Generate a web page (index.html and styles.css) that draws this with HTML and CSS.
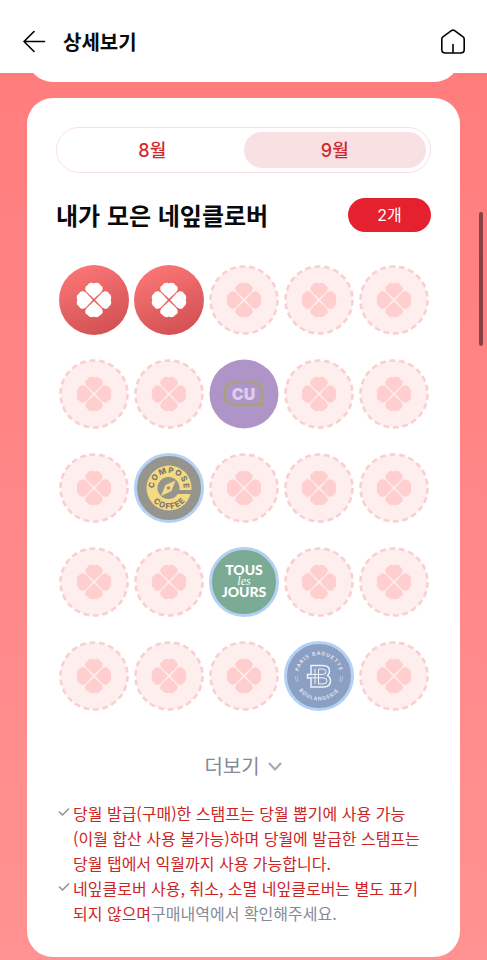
FILE: index.html
```
<!DOCTYPE html>
<html lang="ko">

<head>
    <meta charset="UTF-8" />
    <meta name="viewport" content="width=device-width, initial-scale=1.0" />
    <title>상세보기</title>
    <link rel="stylesheet" href="styles.css">
</head>

<body>
    <!-- Shared shapes -->
    <svg class="defs" width="0" height="0" aria-hidden="true">
        <defs>
            <linearGradient id="red" x1="0.3" y1="0" x2="0.7" y2="1">
                <stop offset="0" stop-color="#fb7676" />
                <stop offset="1" stop-color="#d15052" />
            </linearGradient>
            <path id="petal" d="M35 33.8 L28 27.3 C25.4 24.8 25.8 21 28.6 20.2 C29.6 17.6 33.4 17.2 35 18.4 C36.6 17.2 40.4 17.6 41.4 20.2 C44.2 21 44.6 24.8 42 27.3 Z" />
            <g id="clover">
                <use href="#petal" />
                <use href="#petal" transform="rotate(90 35 35)" />
                <use href="#petal" transform="rotate(180 35 35)" />
                <use href="#petal" transform="rotate(270 35 35)" />
            </g>
            <symbol id="empty" viewBox="0 0 70 70">
                <circle cx="35" cy="35" r="33.5" fill="#ffeeee" stroke="#f9d0d0" stroke-width="2.6" stroke-dasharray="5.8 3.77" />
                <use href="#clover" fill="#ffcfcf" />
            </symbol>
            <symbol id="filled" viewBox="0 0 70 70">
                <circle cx="35" cy="35" r="35" fill="url(#red)" />
                <use href="#clover" fill="#fff" />
            </symbol>
        </defs>
    </svg>

    <header class="topbar">
        <button class="icon-btn" type="button" aria-label="뒤로">
            <svg width="24" height="24" viewBox="0 0 24 24"><path d="M11 1.5 L1 11.5 L11 21.5 M1 11.5 H21.5" /></svg>
        </button>
        <h1>상세보기</h1>
        <a class="home" href="#" aria-label="홈">
            <svg width="26" height="26" viewBox="0 0 26 26"><path d="M1.8 10.2 Q1.8 8.8 2.9 7.9 L11.4 1.7 Q13 0.6 14.6 1.7 L23.1 7.9 Q24.2 8.8 24.2 10.2 V20.5 Q24.2 24 20.7 24 H5.3 Q1.8 24 1.8 20.5 Z M13 15.5 V24" /></svg>
        </a>
    </header>

    <main>
        <section class="card-prev"></section>

        <section class="card">
            <div class="tabs">
                <button type="button">8월</button>
                <button type="button" class="active">9월</button>
            </div>

            <div class="title-row">
                <h2>내가 모은 네잎클로버</h2>
                <span class="count">2개</span>
            </div>

            <ul class="stamps">
                <li><svg><use href="#filled" /></svg></li>
                <li><svg><use href="#filled" /></svg></li>
                <li><svg><use href="#empty" /></svg></li>
                <li><svg><use href="#empty" /></svg></li>
                <li><svg><use href="#empty" /></svg></li>

                <li><svg><use href="#empty" /></svg></li>
                <li><svg><use href="#empty" /></svg></li>
                <li>
                    <svg class="cu" viewBox="0 0 70 70">
                        <circle cx="35" cy="35" r="34.5" fill="#ae94c7" />
                        <path d="M31.5 23.5 H26 C18.5 23.5 15.5 28.5 15.5 34.8 C15.5 41 18.5 46 26 46 H54 L51.5 41.5 C52.8 39.5 53.5 37 53.5 34.8 C53.5 28.5 50.5 23.5 43 23.5 H35.5" fill="none" stroke="#a5a37a" stroke-width="2.6" stroke-linejoin="round" />
                        <text x="34.5" y="40.5" text-anchor="middle">CU</text>
                    </svg>
                </li>
                <li><svg><use href="#empty" /></svg></li>
                <li><svg><use href="#empty" /></svg></li>

                <li><svg><use href="#empty" /></svg></li>
                <li>
                    <svg class="compose" viewBox="0 0 70 70">
                        <circle cx="35" cy="35" r="33.5" fill="#95948d" stroke="#b3d1f4" stroke-width="3" />
                        <circle cx="35" cy="35" r="22.5" fill="#f4da83" />
                        <circle cx="34.5" cy="35" r="11" fill="#95948d" />
                        <path d="M40 37 H59 V41 H40 Z" fill="#95948d" />
                        <path d="M41.5 27.5 L37.5 38 L27 43 L31.5 32 Z" fill="#f4da83" />
                        <circle cx="34.5" cy="35" r="1.8" fill="#95948d" />
                        <path id="composeTop" d="M20.5 38.5 A14.800 14.800 0 1 1 47.500 42.500" fill="none" />
                        <path id="composeBottom" d="M14.2 35 A20.8 20.8 0 0 0 55.8 35" fill="none" />
                        <text><textPath href="#composeTop" startOffset="47%" text-anchor="middle">COMPOSE</textPath></text>
                        <text><textPath href="#composeBottom" startOffset="51%" text-anchor="middle">COFFEE</textPath></text>
                    </svg>
                </li>
                <li><svg><use href="#empty" /></svg></li>
                <li><svg><use href="#empty" /></svg></li>
                <li><svg><use href="#empty" /></svg></li>

                <li><svg><use href="#empty" /></svg></li>
                <li><svg><use href="#empty" /></svg></li>
                <li>
                    <svg class="tous" viewBox="0 0 70 70">
                        <circle cx="35" cy="35" r="33.5" fill="#7baa95" stroke="#b3d1f4" stroke-width="3" />
                        <text x="35" y="28" text-anchor="middle">TOUS</text>
                        <text class="les" x="35" y="38" text-anchor="middle">les</text>
                        <text x="35" y="50" text-anchor="middle">JOURS</text>
                    </svg>
                </li>
                <li><svg><use href="#empty" /></svg></li>
                <li><svg><use href="#empty" /></svg></li>

                <li><svg><use href="#empty" /></svg></li>
                <li><svg><use href="#empty" /></svg></li>
                <li><svg><use href="#empty" /></svg></li>
                <li>
                    <svg class="paris" viewBox="0 0 70 70">
                        <circle cx="35" cy="35" r="33.5" fill="#8b9fc3" stroke="#b3d1f4" stroke-width="3" />
                        <path id="parisTop" d="M14 35 A21 21 0 0 1 56 35" fill="none" />
                        <path id="parisBottom" d="M10.5 35 A24.5 24.5 0 0 0 59.5 35" fill="none" />
                        <text><textPath href="#parisTop" startOffset="50%" text-anchor="middle">PARIS BAGUETTE</textPath></text>
                        <text><textPath href="#parisBottom" startOffset="50%" text-anchor="middle">BOULANGERIE</textPath></text>
                        <g fill="none" stroke="#eef2fa">
                            <path d="M27 24.5 H39 Q45.5 24.5 45.5 30 Q45.5 33 43.5 34.5 Q46.5 36.5 46.5 39.5 Q46.5 46 39.5 46 H27 V37 H23.5 V33.5 H27 Z" stroke-width="1.5" />
                            <path d="M31 27.5 V43 M34.5 43 V28 H38.5 Q42 28 42 30.8 Q42 33.5 38.5 33.5 H27 M27 36.8 H39 Q43 36.8 43 39.8 Q43 43 39 43 H34.5" stroke-width="1" />
                            <path d="M11.5 35 Q11.5 38 12.5 41 M13.5 35 Q13.5 38 14.5 41 M58.5 35 Q58.5 38 57.5 41 M56.5 35 Q56.5 38 55.5 41" stroke-width="0.6" opacity="0.7" />
                        </g>
                    </svg>
                </li>
                <li><svg><use href="#empty" /></svg></li>
            </ul>

            <button class="more" type="button">
                더보기
                <svg width="16" height="16" viewBox="0 0 16 16"><path d="M2 5 L8 11.5 L14 5" /></svg>
            </button>

            <ul class="notes">
                <li>
                    <svg width="12" height="25" viewBox="0 0 12 25"><path d="M1 10.5 L4.5 14 L11 7.5" /></svg>
                    <p>당월 발급(구매)한 스탬프는 당월 뽑기에 사용 가능<br>(이월 합산 사용 불가능)하며 당월에 발급한 스탬프는<br>당월 탭에서 익월까지 사용 가능합니다.</p>
                </li>
                <li>
                    <svg width="12" height="25" viewBox="0 0 12 25"><path d="M1 10.5 L4.5 14 L11 7.5" /></svg>
                    <p>네잎클로버 사용, 취소, 소멸 네잎클로버는 별도 표기<br>되지 않으며<span>구매내역에서 확인해주세요.</span></p>
                </li>
            </ul>
        </section>
    </main>

    <div class="scroll-thumb"></div>
</body>

</html>
```
FILE: styles.css
```
/* Base */
* {
    box-sizing: border-box;
    margin: 0;
    padding: 0;
}

body {
    font-family: "Noto Sans CJK KR", sans-serif;
    background: linear-gradient(#ff7b7b, #ff9292);
    color: #0a0a0a;
}

button {
    font-family: inherit;
    background: none;
    border: none;
    cursor: pointer;
}

ul {
    list-style: none;
}

svg {
    display: block;
}

.defs {
    position: absolute;
}

/* Top bar */
.topbar {
    display: flex;
    align-items: center;
    height: 73px;
    padding: 10px 21px 0 23px;
    background: #fff;
}

.topbar svg {
    fill: none;
    stroke: #000;
    stroke-width: 1.6;
    stroke-linecap: round;
    stroke-linejoin: round;
}

.topbar h1 {
    margin-left: 16px;
    font-size: 20px;
    font-weight: 700;
    line-height: 28px;
}

.home {
    margin-left: auto;
}

/* Cards */
main {
    padding: 0 27px 3px;
}

.card-prev {
    height: 34px;
    margin-top: -25px;
    margin-bottom: 16px;
    background: #fff;
    border-radius: 0 0 26px 26px;
}

.card {
    padding: 29px 29px 31px;
    background: #fff;
    border-radius: 26px;
}

/* Month tabs */
.tabs {
    display: flex;
    height: 46px;
    padding: 4px;
    border: 1px solid #f9e0e3;
    border-radius: 23px;
}

.tabs button {
    flex: 1;
    padding-bottom: 2px;
    color: #cf2a31;
    font-family: Inter, "Noto Sans CJK KR", sans-serif;
    font-size: 18px;
    font-weight: 500;
    border-radius: 19px;
}

.tabs .active {
    background: #f9e0e3;
}

/* Title */
.title-row {
    display: flex;
    align-items: center;
    justify-content: space-between;
    margin-top: 25px;
}

.title-row h2 {
    font-size: 24px;
    font-weight: 700;
    line-height: 34px;
}

.count {
    width: 83px;
    color: #fff;
    background: #e6212f;
    border-radius: 17px;
    font-family: Inter, "Noto Sans CJK KR", sans-serif;
    font-size: 16px;
    line-height: 34px;
    text-align: center;
}

/* Stamps */
.stamps {
    display: grid;
    grid-template-columns: repeat(5, 1fr);
    row-gap: 24px;
    justify-items: center;
    margin-top: 33px;
}

.stamps svg {
    width: 70px;
    height: 70px;
}

.cu text {
    font: 900 16px Inter, sans-serif;
    fill: #dccdf0;
}

.compose text {
    font: 800 8px Inter, sans-serif;
    fill: #7d7a6f;
    letter-spacing: 1px;
}

.tous text {
    font: 900 14px Lato, sans-serif;
    fill: #fff;
}

.tous .les {
    font: italic 12px "Liberation Serif", serif;
}

.paris text {
    font: 600 5px Inter, sans-serif;
    fill: #e6ecf7;
    letter-spacing: 1px;
}

/* More button */
.more {
    display: flex;
    align-items: center;
    gap: 7px;
    margin: 41px auto 21px;
    color: #858a94;
    font-size: 20px;
    line-height: 28px;
}

.more svg {
    fill: none;
    stroke: #a5a9b2;
    stroke-width: 2.2;
}

/* Notes */
.notes {
    color: #cd2424;
    font-size: 16px;
    line-height: 25px;
}

.notes li {
    display: flex;
    gap: 3px;
    padding-left: 2px;
}

.notes svg {
    flex: none;
    fill: none;
    stroke: #8b919b;
    stroke-width: 1.5;
}

.notes p {
    white-space: nowrap;
}

.notes span {
    color: #858a94;
}

.scroll-thumb {
    position: absolute;
    top: 212px;
    right: 4px;
    width: 4px;
    height: 134px;
    background: #8b4044;
    border-radius: 2px;
}
```
